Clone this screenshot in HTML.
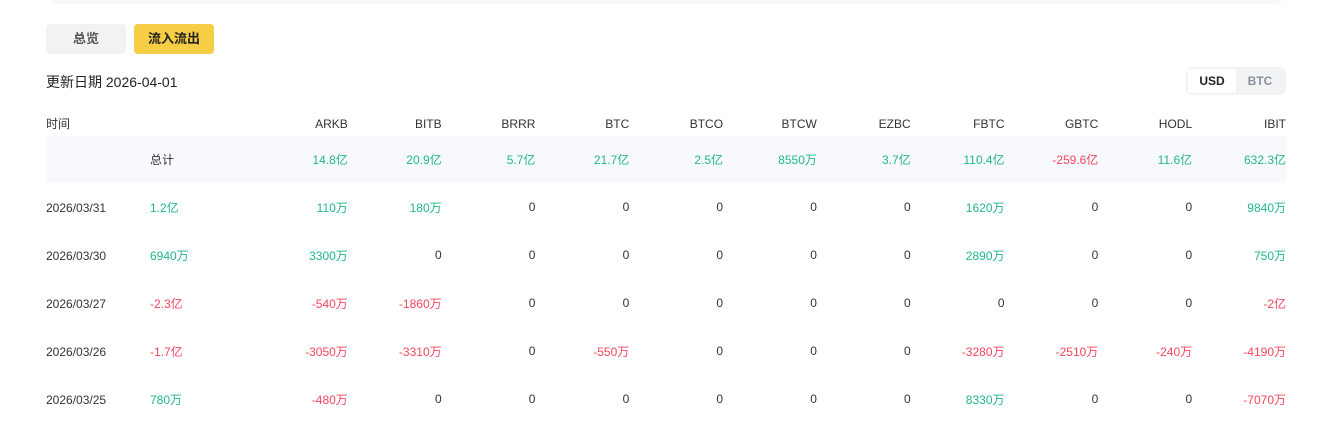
<!DOCTYPE html>
<html><head><meta charset="utf-8"><style>
*{margin:0;padding:0;box-sizing:border-box}
body{width:1318px;height:424px;background:#fff;font-family:"Liberation Sans","Noto Sans CJK SC",sans-serif;color:#333;position:relative;overflow:hidden}
.top{position:absolute;left:46px;top:-20px;width:1240px;height:24px;background:#f7f8fa;border-radius:12px}
.btn{position:absolute;top:24px;height:30px;width:80px;border-radius:4px;font-size:13px;line-height:30px;text-align:center;font-weight:bold}
.date{position:absolute;left:46px;top:72px;font-size:14px;color:#222}
.tog{position:absolute;left:1186px;top:67px;width:100px;height:28px;background:#f2f3f5;border-radius:6px}
.tog span{position:absolute;top:2px;height:24px;width:48px;line-height:24px;text-align:center;font-size:12px;font-weight:bold}
table{position:absolute;left:46px;top:110px;width:1240px;table-layout:fixed;border-collapse:collapse;font-size:12px}
td{height:48px;text-align:right;padding:0}
td:first-child{width:104px;text-align:left;padding-top:1px}
td:nth-child(2){width:104px;text-align:left}
tr.h td{height:26px;vertical-align:middle;color:#333;padding-top:1px}
tr.t td{background:#f8f9fc;height:47px}
.g{color:#20b68a}.r{color:#f6465d}
</style></head><body>
<div class="top"></div>
<div class="btn" style="left:46px;background:#f1f2f4;color:#555">总览</div>
<div class="btn" style="left:134px;background:#f5ce46;color:#222">流入流出</div>
<div class="date">更新日期 2026-04-01</div>
<div class="tog"><span style="left:2px;background:#fff;color:#222">USD</span><span style="left:50px;color:#8a8f9c">BTC</span></div>
<table>
<tr class="h"><td>时间</td><td></td><td>ARKB</td><td>BITB</td><td>BRRR</td><td>BTC</td><td>BTCO</td><td>BTCW</td><td>EZBC</td><td>FBTC</td><td>GBTC</td><td>HODL</td><td>IBIT</td></tr>
<tr class="t"><td></td><td>总计</td><td class="g">14.8亿</td><td class="g">20.9亿</td><td class="g">5.7亿</td><td class="g">21.7亿</td><td class="g">2.5亿</td><td class="g">8550万</td><td class="g">3.7亿</td><td class="g">110.4亿</td><td class="r">-259.6亿</td><td class="g">11.6亿</td><td class="g">632.3亿</td></tr>
<tr><td>2026/03/31</td><td class="g">1.2亿</td><td class="g">110万</td><td class="g">180万</td><td>0</td><td>0</td><td>0</td><td>0</td><td>0</td><td class="g">1620万</td><td>0</td><td>0</td><td class="g">9840万</td></tr>
<tr><td>2026/03/30</td><td class="g">6940万</td><td class="g">3300万</td><td>0</td><td>0</td><td>0</td><td>0</td><td>0</td><td>0</td><td class="g">2890万</td><td>0</td><td>0</td><td class="g">750万</td></tr>
<tr><td>2026/03/27</td><td class="r">-2.3亿</td><td class="r">-540万</td><td class="r">-1860万</td><td>0</td><td>0</td><td>0</td><td>0</td><td>0</td><td>0</td><td>0</td><td>0</td><td class="r">-2亿</td></tr>
<tr><td>2026/03/26</td><td class="r">-1.7亿</td><td class="r">-3050万</td><td class="r">-3310万</td><td>0</td><td class="r">-550万</td><td>0</td><td>0</td><td>0</td><td class="r">-3280万</td><td class="r">-2510万</td><td class="r">-240万</td><td class="r">-4190万</td></tr>
<tr><td>2026/03/25</td><td class="g">780万</td><td class="r">-480万</td><td>0</td><td>0</td><td>0</td><td>0</td><td>0</td><td>0</td><td class="g">8330万</td><td>0</td><td>0</td><td class="r">-7070万</td></tr>
</table>
</body></html>
